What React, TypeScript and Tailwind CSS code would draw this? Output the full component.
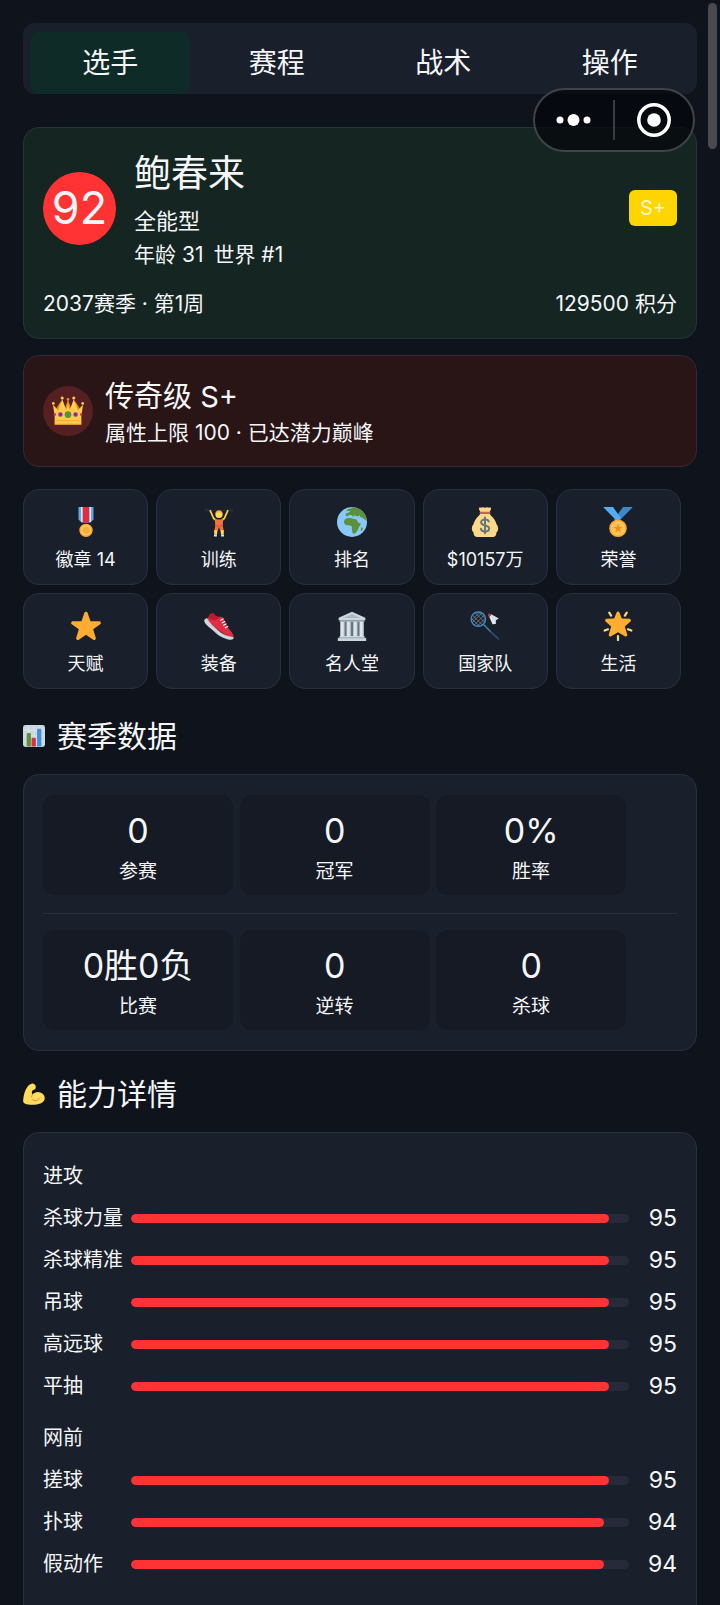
import { useState } from "react";
import type { ReactNode } from "react";

const Svg = ({ children }: { children: ReactNode }) => (
  <svg viewBox="0 0 36 36" className="w-full h-full" aria-hidden="true">
    {children}
  </svg>
);

const STAR =
  "M18 1c.9 0 1.700.6 2 1.400l3.400 9.800h10.300c.9 0 1.700.6 2 1.500.3.8 0 1.800-.7 2.300l-8.400 6 3.100 10.200c.3.8 0 1.800-.7 2.300-.7.5-1.700.5-2.400 0L18 28.400l-8.600 6.100c-.7.500-1.700.5-2.400 0-.7-.5-1-1.500-.7-2.300L9.400 22 1 16c-.7-.5-1-1.500-.7-2.300.3-.9 1.100-1.500 2-1.500h10.300L16 2.400C16.300 1.600 17.100 1 18 1z";

const Crown = () => (
  <Svg>
    <path fill="#F4900C" d="M11 20L10 7l-5 8zM25 20l1-13 5 8z" />
    <path fill="#F4900C" d="M13 20l5-15 5 15z" />
    <path fill="#FFCC4D" d="M3 33V23L1 11l6 6 4.500-12.500L16 17l2-7 2 7 4.500-12.500L29 17l6-6-2 12v10z" />
    <path fill="#FFAC33" d="M3 28h30v1.500H3zM3 32h30v1.500H3z" />
    <g fill="#FFCC4D">
      <circle cx="1.500" cy="9.500" r="1.500" />
      <circle cx="34.500" cy="9.500" r="1.500" />
      <circle cx="11.500" cy="3.500" r="1.700" />
      <circle cx="24.500" cy="3.500" r="1.700" />
    </g>
    <circle cx="18" cy="5" r="1.500" fill="#F4900C" />
    <circle cx="18" cy="22" r="3.800" fill="#5C913B" />
    <circle cx="9.500" cy="22" r="2.500" fill="#9228A8" />
    <circle cx="26.500" cy="22" r="2.500" fill="#9228A8" />
    <circle cx="3" cy="22" r="1.500" fill="#C92A4A" />
    <circle cx="33" cy="22" r="1.500" fill="#C92A4A" />
  </Svg>
);

const Badge = () => (
  <Svg>
    <path fill="#55ACEE" d="M9 0h18v15l-4 4H13l-4-4z" />
    <path fill="#E1E8ED" d="M12 0h12v18H12z" />
    <path fill="#DD2E44" d="M14 0h8v19h-8z" />
    <circle cx="18" cy="28" r="8" fill="#FFAC33" />
    <circle cx="18" cy="28" r="6" fill="#FFD27A" />
    <circle cx="18" cy="28" r="4.500" fill="#FFAC33" />
  </Svg>
);

const Lifter = () => (
  <Svg>
    <path stroke="#2B3338" strokeWidth="1" d="M1 4h34" />
    <path fill="#2B3338" d="M1 2.500h1v3H1zM3 1.500h1v5H3zM32 1.500h1v5h-1zM34 2.500h1v3h-1z" />
    <path fill="none" stroke="#FFCC4D" strokeWidth="2.200" strokeLinecap="round" strokeLinejoin="round" d="M7.500 4.500l4 9 3.500 3M28.500 4.500l-4 9-3.500 3" />
    <circle cx="18" cy="9" r="4.300" fill="#FFDC5D" />
    <path fill="#FFAC33" d="M13.700 8.500c0-3 2-4.500 4.300-4.500s4.300 1.500 4.300 4.500c-1-1.500-2-2-4.300-2s-3.300.5-4.300 2z" />
    <path fill="#F4703C" d="M13 14.500l3 .5h4l3-.5-.5 8.500 1.500 7h-4l-2-6-2 6h-4l1.500-7z" />
    <path fill="#DA5A27" d="M14 22h8v1.500h-8z" />
    <path fill="#FFDC5D" d="M12.300 28h3.500v5h-3.500zM20.200 28h3.500v5h-3.500z" />
    <path fill="#E1E8ED" d="M12 33h3.500v2.500H12zM20.500 33H24v2.500h-3.500z" />
  </Svg>
);

const Globe = () => (
  <Svg>
    <circle cx="18" cy="18" r="18" fill="#88C9F9" />
    <path
      fill="#5C913B"
      d="M19 .2l-3 1.800-3 .5-2 2.500 3-.5 2 .5-2 2-3 .5-1 2.500 2 1 3-1.500 3 .5 1.500 2 3-.5 3 1.500 2-1 2.500.5L36 17c-.4-6-4-12-10-15-2-1-4.500-1.800-7-1.800z"
    />
    <path
      fill="#5C913B"
      d="M9.500 15c2-1.500 4-2 6.500-1.700 2 .2 3 1.200 5 1.200l2.500.5 2 4 3 .5c0 2-1.500 3.500-2.500 5s-.5 3-2 4.500-2 3-4 3c-1.500 0-1.500-2.500-2-4.500s.5-3-.5-4.500c-1-1-3-.5-5-1s-4-1.500-4-3.500.2-3 1-3.500zM29 24.500l2 .3c0 1.800-.8 3.700-2 4.200-.8-1-.5-3 0-4.500z"
    />
    <path fill="#88C9F9" d="M20 10l5 1.500 2-1.500 1 1-3 2.500-5-1zM27 13l4 4-1.500 2-4-3z" />
  </Svg>
);

const MoneyBag = () => (
  <Svg>
    <path fill="#FDD888" d="M31.900 21c-.6-2.500-1.700-5-3.500-7.200C26 10.800 23 9 23.500 7H12.500c.5 2-2.500 3.800-4.900 6.800C5.800 16 4.700 18.500 4.100 21 2.800 22 2 24.500 2.300 27c.3 2 1.300 3 2 3.500-.2 3 1.400 5.500 4.700 5.500h18c3.300 0 4.900-2.500 4.700-5.500.7-.5 1.700-1.500 2-3.500.3-2.500-.5-5-1.800-6z" />
    <path fill="#FDD888" d="M11 1c1.500-1 2.500 0 3.500-.3C16 0 17 1 18 .7c1 .3 2-.7 3.500 0 1 .3 2-.7 3.500.3.800.8-.5 3.500-1.500 5h-11C11.500 4.500 10.200 1.800 11 1z" />
    <path fill="#BF6952" d="M24.500 7c0 .8-.5 1.300-1.300 1.300H12.800c-.8 0-1.300-.5-1.300-1.300s.5-1.300 1.300-1.300h10.400c.8 0 1.300.5 1.300 1.300z" />
    <path
      fill="none"
      stroke="#67757F"
      strokeWidth="2.400"
      strokeLinecap="round"
      d="M22.500 17.500c-.5-1.700-2.200-2.500-4.500-2.500-2.700 0-4.700 1.200-4.700 3.500 0 4.800 9.700 2.300 9.700 7.200 0 2.300-2 3.600-5 3.600-2.600 0-4.500-1.200-5-3.300M18 12.500v19"
    />
  </Svg>
);

const Medal = () => (
  <Svg>
    <path fill="#3B88C3" d="M35 0H24L13 15l5 3L35 1z" />
    <path fill="#55ACEE" d="M1 0h11l10 14-5 3L1 1z" />
    <circle cx="18" cy="25.500" r="10.500" fill="#FFAC33" />
    <circle cx="18" cy="25.500" r="8" fill="#FFD27A" />
    <circle cx="18" cy="25.500" r="7" fill="#FFBF55" />
    <path fill="#F4900C" d="M18 20l1.400 4h4.100l-3.300 2.500 1.200 4-3.400-2.400-3.400 2.400 1.200-4-3.300-2.500h4.100z" />
  </Svg>
);

const Star = () => (
  <Svg>
    <path fill="#FFAC33" d={STAR} />
  </Svg>
);

const Shoe = () => (
  <Svg>
    <path fill="#BE1931" d="M6 5c2-2.500 5-3.500 6-2 1.500 2.500 4 4 8 4l13 19 3 6-4 2L4 14z" />
    <path fill="#DD2E44" d="M5 7c1 3 5 4 9 4l6-4c2 0 3 1 4 3l3 7c1 4 8 8 8.500 13.500.2 2-1.500 2.500-3.500 2L5 14c-2-2-1.500-5 0-7z" />
    <path fill="#CCD6DD" d="M1 10l2.500-1.500C7 15 12 19 17 23.500c5 4.500 10 6.500 16 7.500 2 .3 2.500.5 2.500 1.500 0 1.500-2 2.200-4 2-7-.5-14-4.500-19-9.500S2 17 .5 13c-.4-1.200-.3-2.200.5-3z" />
    <path fill="none" stroke="#F5F8FA" strokeWidth="1.400" strokeLinecap="round" d="M20 11l3-1.500M22 14l3-1.500M23.500 17l3-1.500M25.500 20l3-1.500" />
  </Svg>
);

const Museum = () => (
  <Svg>
    <path fill="#66757F" d="M4 12h28v20H4z" />
    <path fill="#CCD6DD" d="M18 1L2 8v3h32V8z" />
    <path fill="#AAB8C2" d="M18 3.500L8 8.500h20zM3 11h30v2H3z" />
    <g fill="#CCD6DD">
      <path d="M4 13h5v18H4zM11.500 13h5v18h-5zM19.500 13h5v18h-5zM27 13h5v18h-5z" />
      <path d="M3 30h30v2H3zM1 32.500h34V36H1z" />
    </g>
    <path fill="#E1E8ED" d="M5 13h2v18H5zM12.500 13h2v18h-2zM20.500 13h2v18h-2zM28 13h2v18h-2z" />
    <path fill="#AAB8C2" d="M2 32h32v1H2z" />
  </Svg>
);

const Racket = () => (
  <Svg>
    <path stroke="#4289C1" strokeWidth="1.600" strokeLinecap="round" d="M16 16l10 10" />
    <path stroke="#24506F" strokeWidth="2" strokeLinecap="round" d="M25 25l9 8.500" />
    <path
      stroke="#8899A6"
      strokeWidth=".8"
      d="M3 5l12 12M2 9l9 9M6 2l12 12M10 1l8 8M2 11l9-9M2.500 14L14 2.500M5 17L17 5M9 18l9-9"
    />
    <circle cx="10" cy="9.700" r="8.600" fill="none" stroke="#4289C1" strokeWidth="1.700" />
    <path fill="#E1E8ED" d="M25.500 4L34.500 9l-3.500 2v4.500l-4 .5-4-9z" />
    <path stroke="#AAB8C2" strokeWidth=".7" d="M26 7l5.500 3.500" />
    <path fill="#DD2E44" d="M21.700 4.500c0-1.500 1.800-2 2.800-1l1.300 1-2.800 2.800c-1-.8-1.500-1.500-1.300-2.800z" />
  </Svg>
);

const Glow = () => (
  <Svg>
    <path fill="none" stroke="#FFD983" strokeWidth="2.600" strokeLinecap="round" d="M7.500 2l2.200 3.500M28.500 2l-2.200 3.500M2 23.500l4-1.500M34 23.500L30 22M18 30v5" />
    <path
      fill="#FFAC33"
      d="M18 .5c.8 0 1.400.5 1.700 1.300l2.900 7.300 8.900.2c.9 0 1.600.6 1.800 1.400.3.800 0 1.600-.7 2.100l-6.400 5.700 2.900 9.800c.2.800-.1 1.600-.8 2-.6.5-1.500.5-2.100 0L18 25.500l-8.200 4.800c-.6.500-1.500.5-2.100 0-.7-.4-1-1.200-.8-2l2.900-9.800-6.400-5.700c-.7-.5-1-1.300-.7-2.100.2-.8.900-1.400 1.800-1.400l8.900-.2 2.900-7.300C16.600 1 17.200.5 18 .5z"
    />
  </Svg>
);

const ChartIcon = () => (
  <Svg>
    <rect width="36" height="36" rx="4" fill="#CCD6DD" />
    <path stroke="#E1E8ED" strokeWidth="1" d="M1 9h34M1 18h34M1 27h34M9 1v34M18 1v34M27 1v34" />
    <path fill="#5C913B" d="M6 15c0-1 1-2 2-2h3c1 0 2 1 2 2v20H6z" />
    <path fill="#DD2E44" d="M14 23c0-1 1-2 2-2h3c1 0 2 1 2 2v12h-7z" />
    <path fill="#3B94D9" d="M23 8c0-1 1-2 2-2h3c1 0 2 1 2 2v27h-7z" />
  </Svg>
);

const Muscle = () => (
  <Svg>
    <path
      fill="#FFDC5D"
      d="M15 1c2-.8 4.500 1 5.500 3.500.8 2 .5 4-.5 5.500-1 1.300-3.500 1-5 3-1 1.500-.5 4 .5 6 2.500-3 6.500-4.500 10.500-4 6 .8 10 5 9.500 10.500-.5 6-6 8.500-13 9.500-6.500 1-14 .8-19-1-3-1-3.500-3-3.200-6C1 19 3.500 11 8 5.500 10 3 12.500 2 15 1z"
    />
    <path fill="none" stroke="#EF9645" strokeWidth="1.800" strokeLinecap="round" d="M15.500 19c-1 1.500-1.500 2.500-1.500 4M16 27.500c4 2.500 8.500 1.500 10.500-2" />
  </Svg>
);

const TABS = ["选手", "赛程", "战术", "操作"];

const ACTIONS = [
  { label: "徽章 14", icon: <Badge /> },
  { label: "训练", icon: <Lifter /> },
  { label: "排名", icon: <Globe /> },
  { label: "$10157万", icon: <MoneyBag /> },
  { label: "荣誉", icon: <Medal /> },
  { label: "天赋", icon: <Star /> },
  { label: "装备", icon: <Shoe /> },
  { label: "名人堂", icon: <Museum /> },
  { label: "国家队", icon: <Racket /> },
  { label: "生活", icon: <Glow /> },
];

const STATS = [
  [
    { value: "0", label: "参赛" },
    { value: "0", label: "冠军" },
    { value: "0%", label: "胜率" },
  ],
  [
    { value: "0胜0负", label: "比赛" },
    { value: "0", label: "逆转" },
    { value: "0", label: "杀球" },
  ],
];

const ABILITIES = [
  {
    title: "进攻",
    items: [
      { name: "杀球力量", value: 95 },
      { name: "杀球精准", value: 95 },
      { name: "吊球", value: 95 },
      { name: "高远球", value: 95 },
      { name: "平抽", value: 95 },
    ],
  },
  {
    title: "网前",
    items: [
      { name: "搓球", value: 95 },
      { name: "扑球", value: 94 },
      { name: "假动作", value: 94 },
    ],
  },
  { title: "防守", items: [] },
];

const MAX_ABILITY = 99;

const SectionTitle = ({ icon, children }: { icon: ReactNode; children: ReactNode }) => (
  <h2 className="mt-[23px] mb-[18px] flex items-center gap-3 text-[30px] leading-10">
    <span className="size-[22px]">{icon}</span>
    {children}
  </h2>
);

const StatRow = ({ stats }: { stats: { value: string; label: string }[] }) => (
  <div className="flex">
    {stats.map((stat) => (
      <div key={stat.label} className="w-[30%] mr-[1%] rounded-xl bg-[#151a25] pt-[14px] pb-[10px] text-center">
        <div className="text-[34px] leading-[44px]">{stat.value}</div>
        <div className="mt-[6px] text-[19px] leading-[26px]">{stat.label}</div>
      </div>
    ))}
  </div>
);

const AbilityRow = ({ name, value }: { name: string; value: number }) => (
  <div className="flex items-center h-[42px]">
    <span className="w-[88px] whitespace-nowrap text-xl">{name}</span>
    <div
      role="progressbar"
      aria-label={name}
      aria-valuenow={value}
      aria-valuemax={MAX_ABILITY}
      className="flex-1 h-[9px] rounded-full bg-[#272a38] overflow-hidden"
    >
      <div className="h-full rounded-full bg-[#ff3333]" style={{ width: `${(value / MAX_ABILITY) * 100}%` }} />
    </div>
    <span className="w-12 text-right text-[23px]">{value}</span>
  </div>
);

const MenuCapsule = () => (
  <div className="fixed top-[88px] right-[25px] flex items-center w-[162px] h-16 rounded-full border-2 border-[#404347] bg-[#06070c]/75">
    <button type="button" aria-label="更多" className="flex-1 h-full flex items-center justify-center">
      <svg viewBox="0 0 36 12" className="w-9 h-3" fill="#fff">
        <circle cx="4" cy="6" r="3.500" />
        <circle cx="17.500" cy="6" r="6" />
        <circle cx="31" cy="6" r="3.500" />
      </svg>
    </button>
    <span className="w-[2px] h-10 bg-[#3b3d43]" />
    <button type="button" aria-label="关闭" className="flex-1 h-full flex items-center justify-center">
      <svg viewBox="0 0 34 34" className="size-[34px]">
        <circle cx="17" cy="17" r="15.200" fill="none" stroke="#fff" strokeWidth="3.500" />
        <circle cx="17" cy="17" r="6.800" fill="#fff" />
      </svg>
    </button>
  </div>
);

const App = () => {
  const [activeTab, setActiveTab] = useState(0);

  return (
    <div className="h-screen overflow-y-auto [scrollbar-width:none] bg-[#0f131c] text-[#f4f6f8] font-['Inter','Noto_Sans_CJK_SC',sans-serif]">
      <main className="px-[23px] pt-[23px] pb-6">
        <div role="tablist" className="flex gap-2 px-2 pt-[9px] rounded-xl bg-[#1a202b]">
          {TABS.map((tab, i) => (
            <button
              key={tab}
              type="button"
              role="tab"
              aria-selected={i === activeTab}
              onClick={() => setActiveTab(i)}
              className={`flex-1 h-[62px] rounded-lg text-[28px] ${i === activeTab ? "bg-[#0f2b27]" : ""}`}
            >
              {tab}
            </button>
          ))}
        </div>

        {/* Player card */}
        <section className="mt-[33px] rounded-2xl border border-[#26353a] bg-[#142522] px-[19px] pt-4 pb-[19px]">
          <div className="flex items-center">
            <div className="flex items-center justify-center size-[73px] rounded-full bg-[#ff3333] text-[45px]">92</div>
            <div className="ml-[18px] flex-1">
              <h1 className="text-[37px] leading-[60px]">鲍春来</h1>
              <p className="text-[22px] leading-[34px]">全能型</p>
              <p className="flex gap-[10px] text-[21px] leading-[34px]">
                <span>年龄 31</span>
                <span>世界 #1</span>
              </p>
            </div>
            <span className="flex items-center justify-center w-12 h-9 rounded-md bg-[#ffd500] text-xl text-[#fff8cf]">S+</span>
          </div>
          <div className="mt-[17px] flex justify-between text-[21px] leading-[30px]">
            <span>2037赛季 · 第1周</span>
            <span>129500 积分</span>
          </div>
        </section>

        {/* Tier card */}
        <section className="mt-4 flex items-center rounded-2xl border border-[#33292f] bg-[#291416] p-[19px]">
          <div className="flex items-center justify-center size-[50px] rounded-full bg-[#562023]">
            <span className="size-8">
              <Crown />
            </span>
          </div>
          <div className="ml-3">
            <h2 className="text-[29px] leading-[44px]">传奇级 S+</h2>
            <p className="text-[21px] leading-7">属性上限 100 · 已达潜力巅峰</p>
          </div>
        </section>

        <nav className="mt-[22px] grid grid-cols-5 gap-2 pr-4 pb-1">
          {ACTIONS.map((action) => (
            <button
              key={action.label}
              type="button"
              className="flex flex-col items-center rounded-2xl border border-[#2a303b] bg-[#19202b] pt-[17px] pb-3"
            >
              <span className="size-[30px]">{action.icon}</span>
              <span className="mt-[11px] text-lg leading-6">{action.label}</span>
            </button>
          ))}
        </nav>

        <SectionTitle icon={<ChartIcon />}>赛季数据</SectionTitle>
        <section className="rounded-2xl border border-[#2a303b] bg-[#1a202b] px-[19px] py-5">
          <StatRow stats={STATS[0]} />
          <hr className="mt-[18px] mb-4 border-[#2b303a]" />
          <StatRow stats={STATS[1]} />
        </section>

        <SectionTitle icon={<Muscle />}>能力详情</SectionTitle>
        <section className="rounded-2xl border border-[#2a303b] bg-[#1a202b] px-[19px] py-[22px]">
          {ABILITIES.map((group) => (
            <div key={group.title} className="mb-[10px]">
              <h3 className="flex items-center h-[42px] text-xl">{group.title}</h3>
              {group.items.map((item) => (
                <AbilityRow key={item.name} name={item.name} value={item.value} />
              ))}
            </div>
          ))}
        </section>
      </main>

      <MenuCapsule />
      <div className="fixed top-[3px] right-[3px] w-[9px] h-[146px] rounded-full bg-[#484a4f]" />
    </div>
  );
};

export default App;
